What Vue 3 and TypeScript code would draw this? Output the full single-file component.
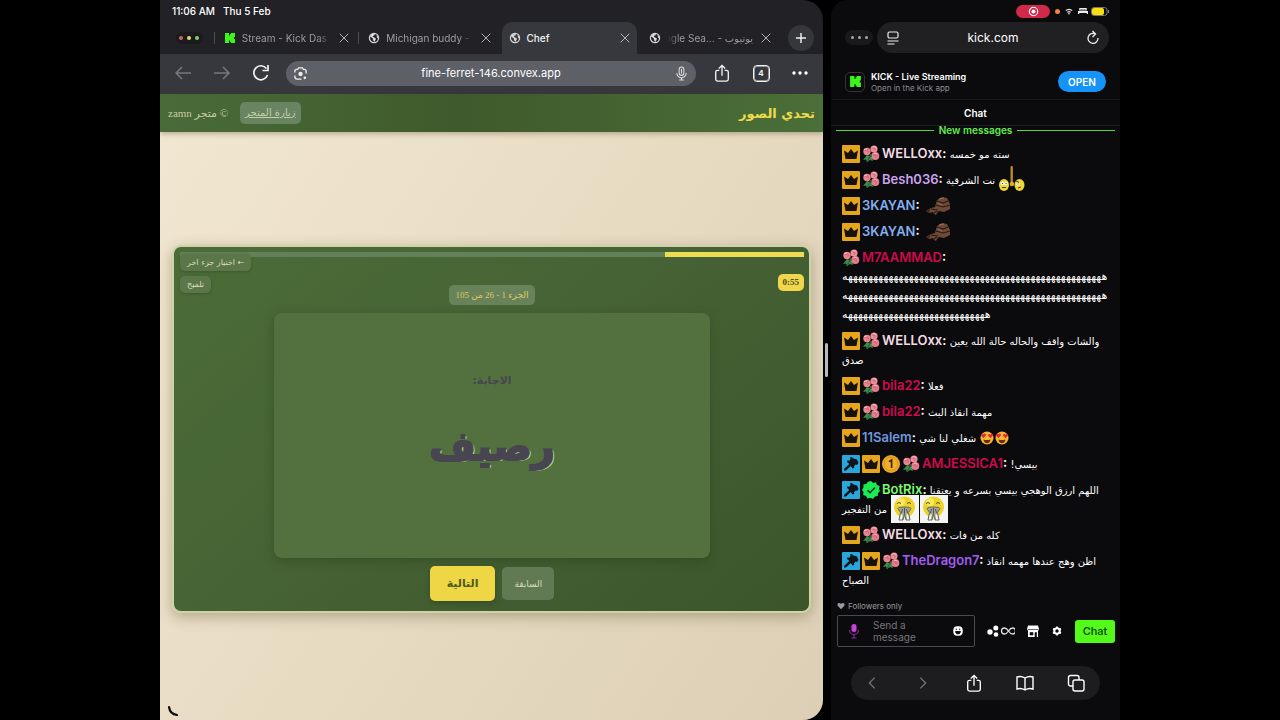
<script setup lang="ts">
import { ref } from 'vue'

type Badge = 'crown' | 'rose' | 'mod' | 'first' | 'verified'
interface Message {
  badges: Badge[]
  name: string
  color: string
  lines?: string[]
  text?: string
  emotes?: string[]
}
interface Tab {
  title: string
  icon: string
  kind: string
}

const tabs: Tab[] = [
  { title: 'Stream - Kick Das', icon: 'kick', kind: 'first' },
  { title: 'Michigan buddy -', icon: 'globe', kind: 'second' },
  { title: 'Chef', icon: 'globe', kind: 'active' },
  { title: 'ogle Sea... - يوتيوب', icon: 'globe', kind: 'last' },
]

const laugh = (n: number) => 'ه'.repeat(n)

const messages: Message[] = [
  { badges: ['crown', 'rose'], name: 'WELLOxx', color: '#f3dbe3', text: 'سته مو خمسه' },
  { badges: ['crown', 'rose'], name: 'Besh036', color: '#c9a2ec', text: 'نت الشرقية', emotes: ['eyes'] },
  { badges: ['crown'], name: '3KAYAN', color: '#84aef0', emotes: ['lump'] },
  { badges: ['crown'], name: '3KAYAN', color: '#84aef0', emotes: ['lump'] },
  { badges: ['rose'], name: 'M7AAMMAD', color: '#cf0a4c', lines: [laugh(52), laugh(52), laugh(29)] },
  { badges: ['crown', 'rose'], name: 'WELLOxx', color: '#f3dbe3', text: 'والشات واقف والحاله حالة الله يعين صدق' },
  { badges: ['crown', 'rose'], name: 'bila22', color: '#cf0a4c', text: 'فعلا' },
  { badges: ['crown', 'rose'], name: 'bila22', color: '#cf0a4c', text: 'مهمة انقاذ البث' },
  { badges: ['crown'], name: '11Salem', color: '#6f96dc', text: 'شغلي لنا شي', emotes: ['love', 'love'] },
  { badges: ['mod', 'crown', 'first', 'rose'], name: 'AMJESSICA1', color: '#cf0a4c', text: 'بيسي!' },
  { badges: ['mod', 'verified'], name: 'BotRix', color: '#7dfa6d', text: 'اللهم ارزق الوهجي بيسي بسرعه و يعتقنا من التفجير', emotes: ['pray', 'pray'] },
  { badges: ['crown', 'rose'], name: 'WELLOxx', color: '#f3dbe3', text: 'كله من فات' },
  { badges: ['mod', 'crown', 'rose'], name: 'TheDragon7', color: '#a35df0', text: 'اظن وهج عندها مهمه انقاذ الصباح' },
]

const url = ref('fine-ferret-146.convex.app')
const draft = ref('')
const progress = ref(22.3)
</script>

<template>
  <svg class="defs" aria-hidden="true">
    <symbol id="i-kick" viewBox="0 0 12 12"><path d="M1 1h4v2.500h1V2h1V1h4v4h-1v2h1v4H7v-1H6V8.500H5V11H1z" fill="#3cf51b" /></symbol>
    <symbol id="i-globe" viewBox="0 0 12 12">
      <circle cx="6" cy="6" r="4.600" fill="none" stroke="#d8d8dc" stroke-width="1.200" />
      <path d="M2 4.500l2-2.500 3-.5-.5 1.800-1.700.7.700 1.300 2 .700.300 1.500-1.500 2.500-1.300-2-.300-1.700z M8.500 3l1.800 1.500.200 2.500-1.500-1.500z" fill="#d8d8dc" />
    </symbol>
    <symbol id="i-x" viewBox="0 0 10 10"><path d="M1 1l8 8M9 1l-8 8" fill="none" stroke="currentColor" stroke-width="1" stroke-linecap="round" /></symbol>
    <symbol id="i-left" viewBox="0 0 18 18"><path d="M17 9H2M8 3L2 9l6 6" fill="none" stroke="currentColor" stroke-width="1.500" /></symbol>
    <symbol id="i-right" viewBox="0 0 18 18"><path d="M1 9h15M10 3l6 6-6 6" fill="none" stroke="currentColor" stroke-width="1.500" /></symbol>
    <symbol id="i-reload" viewBox="0 0 18 18"><path d="M15.500 11A7 7 0 1 1 14.500 4.600M10.500 6.500h5.500V1" fill="none" stroke="currentColor" stroke-width="1.700" /></symbol>
    <symbol id="i-lens" viewBox="0 0 16 16">
      <path d="M2 7V5.500A2 2 0 0 1 4 3.500h1l1-1.500h4l1 1.500h1a2 2 0 0 1 2 2V8M2 10v1.500a2.500 2.500 0 0 0 2.500 2.500H9" fill="none" stroke="#eee" stroke-width="1.400" />
      <circle cx="8" cy="8.500" r="2.300" fill="#eee" /><circle cx="12.600" cy="12.600" r="1.400" fill="#eee" />
    </symbol>
    <symbol id="i-mic" viewBox="0 0 16 16">
      <rect x="5.500" y="1" width="5" height="9" rx="2.500" fill="none" stroke="currentColor" stroke-width="1.100" />
      <path d="M3 7.500a5 5 0 0 0 10 0M8 12.500V15M5.500 15h5M8 3v5" fill="none" stroke="currentColor" stroke-width="1.100" />
    </symbol>
    <symbol id="i-share" viewBox="0 0 18 20"><path d="M6 7H4a2 2 0 0 0-2 2v8a2 2 0 0 0 2 2h10a2 2 0 0 0 2-2V9a2 2 0 0 0-2-2h-2M9 13V1.500M5.500 5L9 1.500 12.500 5" fill="none" stroke="currentColor" stroke-width="1.500" /></symbol>
    <symbol id="i-crown" viewBox="0 0 18 18"><rect width="18" height="18" rx="1" fill="#e5a51c" /><path d="M2 5.500l4 2.500L9 4l3 4 4-2.500-1.500 8.500h-11z" fill="#17110a" /></symbol>
    <symbol id="i-rose" viewBox="0 0 18 18">
      <path d="M5 10l-4 5 3-.5L5 17l3-2 3 1-1-4z" fill="#3f8a4c" /><path d="M9 9l-4 8" stroke="#276b38" stroke-width="1.300" />
      <circle cx="5" cy="6.500" r="3.700" fill="#e8838f" /><circle cx="12" cy="4" r="3.600" fill="#ec8d99" /><circle cx="13.300" cy="11" r="4" fill="#e47c8a" />
      <path d="M3 6c2-2 4-.5 3 1.500M10.500 4c1.500-2 3.500 0 2 1.500M11.500 11c1-2.500 4-1 2.500 1.500" fill="none" stroke="#c05f70" stroke-width="1" />
      <path d="M2 4.500l3-.5M11 1.500l3 .8M12 8l3 1" stroke="#f8b6bb" stroke-width="1" />
    </symbol>
    <symbol id="i-mod" viewBox="0 0 18 18"><rect width="18" height="18" rx="1" fill="#2aa7da" /><path d="M8 2.500l2-.5.8 1.200 4.200 1.300 1.500 3.500-1.500 2-1.300-.5-1.700 1.800.3 1.700-1.800.5-1.700-2.500L4.500 15 2.500 16 2 14l5.300-5L5 7l.5-1.800 2 .5L8.500 4z" fill="#0c141c" /></symbol>
    <symbol id="i-first" viewBox="0 0 18 18"><circle cx="9" cy="9" r="9" fill="#eda928" /><circle cx="9" cy="9" r="6.800" fill="#f3ae2b" stroke="#d58d17" stroke-width=".8" /><path d="M7 6.700L9.600 5v8" fill="none" stroke="#33230a" stroke-width="1.600" /></symbol>
    <symbol id="i-verified" viewBox="0 0 18 18"><path d="M9 0l2.200 2 2.800-.7.900 2.800L17.700 5 17 8l1 2-2 2-.2 3-2.900.5L11 18l-2.500-1.200L5.500 17.500 4 15l-2.800-1L1.500 11 0 9l1.500-2.500L1.300 3.500 4.200 3 6 .8z" fill="#1cea53" /><path d="M5.500 9.200l2.500 2.500 5-5.200" fill="none" stroke="#08330f" stroke-width="1.600" /></symbol>
    <symbol id="i-eyes" viewBox="0 0 26 30">
      <rect x="11.500" y="1" width="2.400" height="20" rx="1" fill="#b8892a" /><circle cx="13" cy="19" r="2.300" fill="#d9ac2e" />
      <ellipse cx="5" cy="20" rx="5" ry="6" fill="#edd735" /><ellipse cx="20.500" cy="20" rx="5" ry="6" fill="#edd735" />
      <circle cx="3.500" cy="18.500" r="1.700" fill="#fff" /><circle cx="7" cy="18.500" r="1.700" fill="#fff" /><circle cx="19" cy="19" r="1.700" fill="#fff" />
      <path d="M3.500 18v1M7 18v1M19 18.500v1M3 22.500h4M17 16l3 1.500M19 23l3-1" stroke="#4a3908" stroke-width="1" />
    </symbol>
    <symbol id="i-lump" viewBox="0 0 26 20">
      <path d="M1 15l5-3 4-1 2-7 5-3 5 1 3 6v5l-6 3-5-1-2 2-1 2-2-1-1-2-3 1-3-1z" fill="#6d4a37" />
      <path d="M12 5l6 2 5-2M11 9l7 2 7-2M6 13l7 1M2 16l3-2M9 17l3-2" fill="none" stroke="#2b1a13" stroke-width="1.200" />
      <path d="M14 3l5-1M13 7l4 2" stroke="#9b7056" stroke-width="1" />
    </symbol>
    <symbol id="i-love" viewBox="0 0 14 14">
      <circle cx="7" cy="7" r="6.500" fill="#f7b733" /><path d="M3.500 8.500q3.500 1 7 0-.5 3.800-3.500 3.800T3.500 8.500z" fill="#6b2c10" />
      <path d="M3.500 7.200L1 4.500q0-2 1.400-1.700l1 .7.900-1q1.900-.3 1.800 1.500zM10.500 7.200L8 4.500q-.1-1.800 1.600-1.500l1 .7.900-1q1.700.1 1.500 1.800z" fill="#e4263c" />
    </symbol>
    <symbol id="i-pray" viewBox="0 0 28 28">
      <rect width="28" height="28" fill="#f4f4f2" /><circle cx="13.500" cy="12" r="10.500" fill="#ecd326" /><circle cx="10" cy="7" r="4" fill="#f6e860" />
      <path d="M6 8.500q2-2 4 0M16 8.500q2-2 4 0" fill="none" stroke="#5c4c08" stroke-width="1" />
      <path d="M13 12l-5 .5-1 1 2.500 4L8 25h4l1.500-6L15 25h4l-1.500-7.500 2.500-4-1-1-5-.5z" fill="#a5a59c" stroke="#66665f" stroke-width="1" /><path d="M8.800 24.500l1-5h2l-1 5zM18.200 24.500l-1-5h-2l1 5z" fill="#f6f6f4" />
      <path d="M13.500 13v6M11.500 14l-1 4M15.500 14l1 4" stroke="#55554e" stroke-width="1" />
    </symbol>
  </svg>

  <main class="screen">
    <section class="browser">
      <div class="status"><span>11:06 AM</span><span>Thu 5 Feb</span></div>
      <nav class="tabs" aria-label="Tabs">
        <span class="dots"><i></i><i></i><i></i></span>
        <div v-for="t in tabs" :key="t.title" class="tab" :class="t.kind">
          <svg class="fav"><use :href="'#i-' + t.icon" /></svg>
          <button class="title" type="button"><span>{{ t.title }}</span></button>
          <button class="close" type="button" aria-label="Close tab"><svg><use href="#i-x" /></svg></button>
        </div>
        <button class="plus" type="button" aria-label="New tab"><svg viewBox="0 0 12 12"><path d="M6 1v10M1 6h10" stroke="#eee" stroke-width="1.500" /></svg></button>
      </nav>
      <div class="toolbar">
        <button class="tool dim" type="button" aria-label="Back"><svg><use href="#i-left" /></svg></button>
        <button class="tool dim" type="button" aria-label="Forward"><svg><use href="#i-right" /></svg></button>
        <button class="tool" type="button" aria-label="Reload"><svg><use href="#i-reload" /></svg></button>
        <div class="omni">
          <svg><use href="#i-lens" /></svg>
          <input v-model="url" type="text" aria-label="Address" />
          <svg class="mic"><use href="#i-mic" /></svg>
        </div>
        <button class="tool" type="button" aria-label="Share"><svg><use href="#i-share" /></svg></button>
        <button class="tool" type="button" aria-label="Open tabs"><span class="count">4</span></button>
        <button class="tool" type="button" aria-label="More"><svg viewBox="0 0 18 18"><circle cx="3" cy="9" r="1.700" fill="#fff" /><circle cx="9" cy="9" r="1.700" fill="#fff" /><circle cx="15" cy="9" r="1.700" fill="#fff" /></svg></button>
      </div>
      <header class="site">
        <span class="shop" dir="rtl">© متجر zamn</span>
        <a class="visit" href="#">زيارة المتجر</a>
        <h1>تحدي الصور</h1>
      </header>
      <div class="stage">
        <article class="card">
          <div class="track" role="progressbar" :aria-valuenow="progress"><div class="fill" :style="{ width: progress + '%' }"></div></div>
          <div class="info">
            <div class="side">
              <button class="mini" type="button" dir="rtl">← اختيار جزء اخر</button>
              <button class="mini" type="button">تلميح</button>
            </div>
            <span class="part" dir="rtl">الجزء 1 - 26 من 105</span>
            <span class="timer">0:55</span>
          </div>
          <div class="answer" dir="rtl">
            <p class="label">الاجابة:</p>
            <p class="word">رصيف</p>
          </div>
          <div class="actions">
            <button class="next" type="button">التالية</button>
            <button class="prev" type="button">السابقة</button>
          </div>
        </article>
      </div>
      <svg class="arc" viewBox="0 0 14 14"><path d="M2 3Q3 10 10 11" fill="none" stroke="#0a0a0a" stroke-width="2.200" stroke-linecap="round" /></svg>
    </section>

    <div class="divider"><i></i></div>

    <section class="phone">
      <div class="pstatus">
        <span class="rec"><svg viewBox="0 0 12 12"><circle cx="6" cy="6" r="4.600" fill="none" stroke="#fff" stroke-width="1.200" /><circle cx="6" cy="6" r="2.200" fill="#fff" /></svg></span>
        <i class="orange"></i>
        <svg class="s8" viewBox="0 0 10 8"><path d="M1 3q4-3.500 8 0M3 5q2-1.800 4 0" fill="none" stroke="#eee" stroke-width="1.400" /><circle cx="5" cy="6.800" r="1" fill="#eee" /></svg>
        <svg class="s10" viewBox="0 0 12 9"><path d="M1.500 4V1h9v3zM0 4.500h12V8h-1.500V7h-9v1H0z" fill="#eee" /><path d="M3 3h2.500M6.500 3H9" stroke="#222" stroke-width="1" /></svg>
        <svg class="bat" viewBox="0 0 19 9"><rect x=".5" y=".5" width="15.500" height="8" rx="2.500" fill="none" stroke="#77767a" /><rect x="1" y="1" width="12" height="7" rx="2" fill="#f7df12" /><path d="M17.500 3v3" stroke="#77767a" stroke-width="1.200" /></svg>
      </div>
      <div class="paddr">
        <span class="pdots"><i></i><i></i><i></i></span>
        <div class="pbar">
          <svg viewBox="0 0 14 16"><rect x="2" y="2" width="10" height="6" rx="1.500" fill="none" stroke="#eee" stroke-width="1.200" /><path d="M1.500 11h11M1.500 14h7" stroke="#eee" stroke-width="1.200" /></svg>
          <span>kick.com</span>
          <svg viewBox="0 0 14 16"><path d="M9.500 4A5 5 0 1 0 12 8M6.500 1l3 3-3 3" fill="none" stroke="#eee" stroke-width="1.300" /></svg>
        </div>
      </div>
      <div class="banner">
        <span class="logo"><svg><use href="#i-kick" /></svg></span>
        <div class="app"><strong>KICK - Live Streaming</strong><small>Open in the Kick app</small></div>
        <button class="open" type="button">OPEN</button>
      </div>
      <h2 class="chat-title">Chat</h2>
      <div class="new"><span>New messages</span></div>
      <ul class="chat">
        <li v-for="(m, i) in messages" :key="i">
          <svg v-for="b in m.badges" :key="b" class="badge"><use :href="'#i-' + b" /></svg><b :style="{ color: m.color }">{{ m.name }}</b><b>: </b>
          <bdi v-if="m.text">{{ m.text }}</bdi>
          <template v-if="m.lines"><bdi v-for="(l, k) in m.lines" :key="k" class="laugh">{{ l }}</bdi></template>
          {{ ' ' }}<svg v-for="(e, k) in m.emotes" :key="k" :class="['emote', e]"><use :href="'#i-' + e" /></svg>
        </li>
      </ul>
      <div class="followers"><svg viewBox="0 0 10 10"><path d="M5 9L.8 4.800Q0 1.500 2.600 1.200 4.200 1.200 5 2.500 5.800 1.200 7.400 1.200 10 1.500 9.200 4.800z" fill="#9b9b9f" /></svg>Followers only</div>
      <form class="composer" @submit.prevent>
        <div class="box">
          <svg class="pmic" viewBox="0 0 12 16"><rect x="3.500" y="1" width="5" height="8" rx="2.500" fill="#cb40d8" /><path d="M1.500 7a4.500 4.500 0 0 0 9 0M6 11.500V15M3.500 15h5" fill="none" stroke="#8c2a9c" stroke-width="1.200" /></svg>
          <textarea v-model="draft" rows="2" placeholder="Send a message" aria-label="Send a message"></textarea>
          <svg class="smile" viewBox="0 0 10 10"><rect x=".3" y=".3" width="9.400" height="9.400" rx="4" fill="#fff" /><path d="M2.500 5.500h5q-.3 2.500-2.500 2.500T2.500 5.500zM3.300 2.500v1.600M6.700 2.500v1.600" fill="#0b0a0d" stroke="#0b0a0d" stroke-width=".9" /></svg>
        </div>
        <button class="ico wide" type="button" aria-label="Points"><svg viewBox="0 0 28 12"><circle cx="3" cy="7" r="2.700" fill="#fff" /><circle cx="8.800" cy="3" r="2.500" fill="#fff" /><circle cx="9" cy="9.500" r="2.300" fill="#fff" /><path d="M21.500 6q-2-3-4-3a3 3 0 0 0 0 6q2 0 4-3t4-3a3 3 0 0 1 0 6q-2 0-4-3z" fill="none" stroke="#ddd" stroke-width="1.300" /></svg></button>
        <button class="ico" type="button" aria-label="Shop"><svg viewBox="0 0 12 12"><path d="M1 .5h10l1 3.500-1 2v6H1V6L0 4z" fill="#fff" /><path d="M1 4.500h10M3 7.500h3v2.500H3zM8 7.500h1.500V12H8z" fill="#0b0a0d" stroke="#0b0a0d" stroke-width=".6" /></svg></button>
        <button class="ico" type="button" aria-label="Settings"><svg viewBox="0 0 12 12"><circle cx="6" cy="6" r="2.800" fill="none" stroke="#fff" stroke-width="2" /><path d="M6 1.400v9.200M2 3.700l8 4.600M10 3.700L2 8.300" stroke="#fff" stroke-width="1.700" /><circle cx="6" cy="6" r="1.700" fill="#0b0a0d" /></svg></button>
        <button class="send" type="submit">Chat</button>
      </form>
      <nav class="bottom" aria-label="Browser">
        <button class="dim" type="button" aria-label="Back"><svg viewBox="0 0 18 20"><path d="M12 4L6 10l6 6" fill="none" stroke="currentColor" stroke-width="1.400" /></svg></button>
        <button class="dim" type="button" aria-label="Forward"><svg viewBox="0 0 18 20"><path d="M6 4l6 6-6 6" fill="none" stroke="currentColor" stroke-width="1.400" /></svg></button>
        <button type="button" aria-label="Share"><svg><use href="#i-share" /></svg></button>
        <button type="button" aria-label="Bookmarks"><svg viewBox="0 0 18 18"><path d="M9 4Q5 1.500 1 3v12q4-1.500 8 1 4-2.500 8-1V3q-4-1.500-8 1zv12" fill="none" stroke="currentColor" stroke-width="1.400" /></svg></button>
        <button type="button" aria-label="Tabs"><svg viewBox="0 0 18 18"><rect x="6" y="6" width="11" height="11" rx="2" fill="none" stroke="currentColor" stroke-width="1.400" /><path d="M6 12H3.500A2 2 0 0 1 1.500 10V3.500a2 2 0 0 1 2-2H10a2 2 0 0 1 2 2V6" fill="none" stroke="currentColor" stroke-width="1.400" /></svg></button>
      </nav>
    </section>
  </main>
</template>

<style>
body { background: #000; }
</style>

<style scoped>
* { box-sizing: border-box; }
button { border: 0; padding: 0; margin: 0; background: none; color: inherit; font: inherit; cursor: pointer; }
svg { display: block; flex: none; }
.defs { position: absolute; width: 0; height: 0; }
.screen {
  min-height: 100vh; padding: 0 12.5%; background: #000; color: #fff;
  display: grid; grid-template-columns: 663fr 8fr 289fr;
  font-family: Inter, "DejaVu Sans", sans-serif;
}
.browser { position: relative; min-width: 0; display: flex; flex-direction: column; overflow: hidden; border-radius: 0 20px 20px 0; background: #212126; }
.status { height: 22px; padding: 0 12px; display: flex; align-items: center; gap: 8px; font-size: 10px; font-weight: 500; }
.tabs { height: 32px; display: flex; align-items: center; padding: 0 9px 0 16px; }
.dots { display: flex; gap: 4px; justify-content: center; width: 27px; padding: 4px 0; border-radius: 8px; background: #1b1b1e; margin-right: 12px; }
.dots i { width: 4px; height: 4px; border-radius: 50%; background: #c96a62; }
.dots i:nth-child(2) { background: #e6d36a; }
.dots i:nth-child(3) { background: #8cc77c; }
.tab { display: flex; align-items: center; flex: 1 1 142px; min-width: 0; height: 32px; padding: 0 7px; color: #9c9ca2; }
.tab.active { flex-basis: 136px; margin-left: 4px; background: #37383d; border-radius: 10px 10px 0 0; color: #f0f0f2; }
.tab.first { padding-left: 9px; }
.tab.second, .tab.last { padding-left: 12px; }
.tab.first::before, .tab.second::before { content: ""; width: 1px; height: 12px; background: #4d4d53; margin-left: -10px; margin-right: 9px; }
.fav { width: 12px; height: 12px; margin-right: 6px; }
.title { flex: 1; min-width: 0; white-space: nowrap; text-align: left; font-size: 10px; display: flex; }
.active .title { font-weight: 500; }
.first .title, .second .title { mask-image: linear-gradient(to right, #000 85%, transparent); }
.last .title { justify-content: flex-end; mask-image: linear-gradient(to left, #000 85%, transparent); }
.close { margin-left: 8px; color: #b4b4b9; }
.close svg { width: 10px; height: 10px; }
.plus { width: 26px; height: 26px; margin-left: 10px; border-radius: 50%; background: #36373c; display: grid; place-items: center; }
.plus svg { width: 12px; height: 12px; }
.toolbar { height: 40px; background: #37383d; display: flex; align-items: center; gap: 17px; padding: 0 12px 2px; }
.tool { width: 22px; height: 22px; display: grid; place-items: center; color: #f2f2f4; }
.tool svg { width: 18px; height: 18px; }
.dim { color: #76777c; }
.omni { flex: 1; min-width: 0; height: 25px; margin: 0 -2px 0 -3px; border-radius: 13px; background: #5e6068; display: flex; align-items: center; padding: 0 7px; }
.omni svg { width: 15px; height: 15px; }
.mic { color: #ddd; }
.omni input { flex: 1; min-width: 0; border: 0; outline: 0; background: none; color: #fff; text-align: center; font: 11px Inter, sans-serif; }
.count { width: 17px; height: 17px; border: 1px solid #f2f2f4; border-radius: 4px; box-shadow: inset 0 0 0 1px #f2f2f480; font-size: 8px; font-weight: 700; display: grid; place-items: center; }
.site { height: 38px; display: flex; align-items: center; gap: 12px; padding: 0 8px; background: linear-gradient(90deg, #496b39, #3f5a2c 45%, #446331 70%, #4b6f39); box-shadow: 0 2px 5px #4a402055; z-index: 1; }
.shop { font: 11px "Liberation Serif", "DejaVu Sans", serif; color: #c4cba2; }
.visit { font: 10px "DejaVu Sans", sans-serif; color: #c4d0aa; background: #698460; border-radius: 5px; padding: 5px 5px 6px; }
.site h1 { margin: 0 0 0 auto; font: bold 13px "DejaVu Sans", sans-serif; color: #f0db4c; }
.stage { flex: 1; display: flex; flex-direction: column; justify-content: center; padding: 6px 12px 0; background: linear-gradient(125deg, #f1e6d0, #e7dbc2 50%, #dccfb6); }
.card { border: 2px solid #cdd3a8; border-radius: 9px; padding: 5px 5px 10px 6px; background: linear-gradient(140deg, #4b6c37, #466335 45%, #3c552b); box-shadow: 0 4px 14px #75694777; }
.track { height: 5px; display: flex; justify-content: flex-end; background: #63805a; }
.fill { background: #eddc53; }
.info { display: grid; grid-template-columns: 1fr auto 1fr; height: 51px; margin-top: -3px; position: relative; }
.side { display: flex; flex-direction: column; align-items: flex-start; gap: 5px; }
.mini { height: 17px; padding: 0 7px; border-radius: 5px; background: #5b7749; color: #d8dfba; font: 8px "DejaVu Sans", sans-serif; box-shadow: 0 1px 3px #2a3d1e66; }
.part { align-self: end; height: 20px; padding: 0 6px; border-radius: 5px; background: #68835a; color: #dcc964; font: 9px/20px "Liberation Serif", "DejaVu Sans", serif; }
.timer { justify-self: end; margin-top: 20px; height: 17px; padding: 0 5px; border-radius: 5px; background: #efd64c; color: #4c4a18; font: bold 9px/17px "Liberation Serif", serif; }
.answer { width: 70%; aspect-ratio: 16 / 9; margin: 8px auto; border-radius: 8px; background: #52713f; box-shadow: 0 3px 10px #2b411e88; display: flex; flex-direction: column; align-items: center; padding-top: 59px; color: #494550; }
.answer p { margin: 0; }
.label { font: bold 11px/18px "DejaVu Sans", sans-serif; }
.word { font: bold 40px/112px "DejaVu Sans", sans-serif; -webkit-text-stroke: 2px #494550; text-shadow: 2px 1px 0 #a9d89b; }
.actions { display: flex; align-items: center; justify-content: center; gap: 7px; }
.next { height: 35px; padding: 0 17px; border-radius: 5px; background: #eed644; color: #4c5a1a; font: bold 11px "DejaVu Sans", sans-serif; box-shadow: 0 2px 5px #2b3c1c88; }
.prev { height: 33px; padding: 0 12px; border-radius: 5px; background: #627a53; color: #d2dbb8; font: 9px "DejaVu Sans", sans-serif; }
.arc { position: absolute; left: 7px; bottom: 2px; width: 14px; height: 14px; }

.divider { display: grid; place-items: center start; padding-left: 2px; }
.divider i { width: 3px; height: 34px; border-radius: 2px; background: #b9b9b9; }

.phone { min-width: 0; display: flex; flex-direction: column; background: #0b0a0d; border-radius: 16px 0 0 0; }
.pstatus { height: 22px; display: flex; align-items: center; justify-content: flex-end; gap: 5px; padding: 0 10px; }
.rec { width: 34px; height: 13px; border-radius: 7px; background: #d02949; display: grid; place-items: center; }
.rec svg { width: 11px; height: 11px; }
.orange { width: 5px; height: 5px; border-radius: 50%; background: #f0834a; }
.s8 { width: 8px; height: 7px; }
.s10 { width: 10px; height: 8px; }
.bat { width: 19px; height: 9px; margin-left: -2px; }
.paddr { display: flex; align-items: center; gap: 4px; padding: 0 11px 0 14px; }
.pdots { width: 28px; height: 15px; border-radius: 8px; background: #19181b; display: flex; align-items: center; justify-content: center; gap: 4px; }
.pdots i { width: 3px; height: 3px; border-radius: 50%; background: #aaa; }
.pbar { flex: 1; height: 31px; border-radius: 16px; background: #201f22; display: flex; align-items: center; justify-content: space-between; padding: 0 9px; font-size: 12px; }
.pbar svg { width: 14px; height: 16px; }
.banner { display: flex; align-items: center; height: 47px; gap: 6px; padding: 11px 14px 0; border-bottom: 1px solid #17161a; }
.logo { width: 20px; height: 20px; border: 1px solid #343436; border-radius: 5px; display: grid; place-items: center; }
.logo svg { width: 13px; height: 13px; }
.app { flex: 1; display: flex; flex-direction: column; }
.app strong { font-size: 9px; line-height: 13px; font-weight: 600; }
.app small { font-size: 8px; line-height: 11px; color: #8b8b90; }
.open { width: 48px; height: 21px; border-radius: 11px; background: #1593f8; font-size: 10px; font-weight: 600; }
.chat-title { margin: 0; height: 26px; font-size: 10px; line-height: 26px; font-weight: 600; text-align: center; border-bottom: 1px solid #202024; }
.new { display: flex; align-items: center; gap: 5px; height: 8px; padding: 0 5px; color: #63ee4a; font-size: 10px; line-height: 8px; font-weight: 600; margin-bottom: 7px; }
.new::before, .new::after { content: ""; flex: 1; height: 1px; background: #55d83f; }
.chat { flex: 1; list-style: none; margin: 0; padding: 0 8px 0 11px; font-size: 13px; line-height: 19px; }
.chat li { padding: 3px 0 4px; }
.chat b { font-weight: 600; }
.badge { display: inline-block; width: 18px; height: 18px; margin: -4px 2px -4px 0; vertical-align: middle; }
.chat bdi { font: 10px/1 "DejaVu Sans", sans-serif; }
.chat .laugh { display: block; font-size: 11px; line-height: 19px; text-align: left; direction: ltr; white-space: nowrap; }
.emote { display: inline-block; vertical-align: middle; margin: -10px 0; }
.love { width: 14px; height: 14px; margin-right: 1px; }
.lump { width: 26px; height: 20px; margin-left: 2px; }
.eyes { width: 26px; height: 30px; }
.pray { width: 28px; height: 28px; margin-right: 1px; }
.followers { display: flex; align-items: center; gap: 3px; padding: 0 6px; height: 18px; font-size: 8px; color: #9b9b9f; }
.followers svg { width: 8px; height: 8px; }
.composer { display: flex; align-items: center; gap: 12px; padding: 0 5px 0 6px; }
.box { flex: 1; min-width: 0; height: 32px; border: 1px solid #4b4b4f; border-radius: 2px; display: flex; align-items: center; padding: 0 11px 0 10px; }
.pmic { width: 12px; height: 16px; margin-right: 13px; }
textarea { flex: 0 1 60px; min-width: 0; height: 24px; border: 0; padding: 0; resize: none; outline: 0; overflow: hidden; background: none; color: #fff; font: 10px/12px Inter, sans-serif; }
textarea::placeholder { color: #77777c; }
.smile { width: 10px; height: 10px; margin-left: auto; }
.ico svg { width: 12px; height: 12px; }
.ico.wide svg { width: 28px; }
.send { width: 40px; height: 23px; border-radius: 3px; background: #53fc18; color: #123d08; font-size: 11px; font-weight: 500; }
.bottom { height: 34px; margin: 19px 20px 20px; border-radius: 17px; background: #1d1c1f; display: flex; align-items: center; justify-content: space-between; padding: 0 15px 0 12px; }
.bottom svg { width: 18px; height: 18px; }
</style>
